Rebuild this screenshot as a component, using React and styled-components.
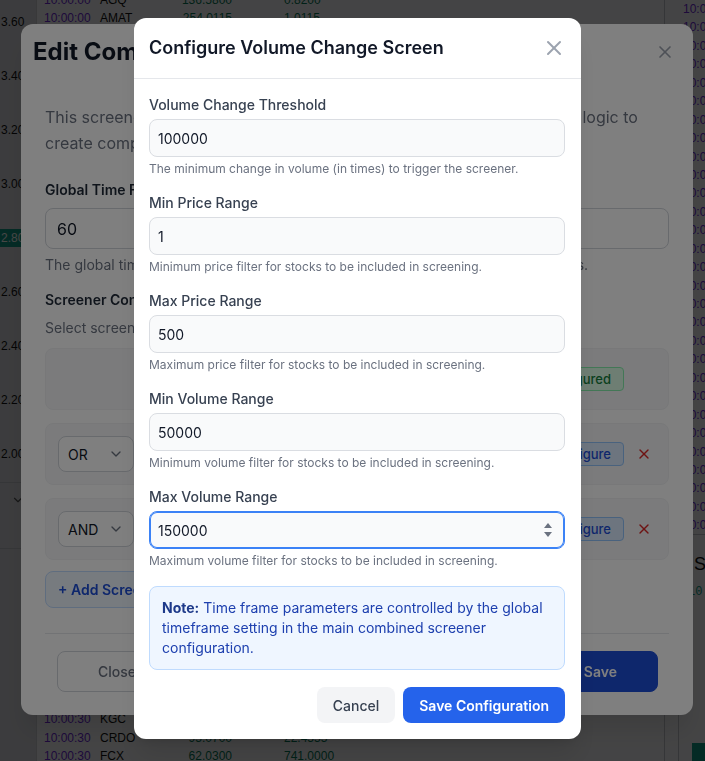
import styled, { createGlobalStyle } from "styled-components";
import { X, ChevronDown } from "lucide-react";

const GlobalStyle = createGlobalStyle`
  * { box-sizing: border-box; }
  body {
    margin: 0;
    overflow: hidden;
    font-family: Inter, "Noto Sans", sans-serif;
  }
`;

/* ---------- page behind the dialogs ---------- */

const Page = styled.div`
  display: flex;
  width: 100vw;
  height: 100vh;
  overflow: hidden;
  background: #fafafb;
  font-family: "Liberation Sans", Arial, sans-serif;
  font-size: 12px;
`;

const ChartStrip = styled.aside`
  width: 37px;
  flex: none;
  display: flex;
  flex-direction: column;
  background: #dcdde2;
  border-right: 1px solid #cfd1d6;
`;

const AxisTicks = styled.div`
  height: 483px;
  padding-top: 13px;
  border-bottom: 1px solid #c4c6cc;
`;

const Tick = styled.div`
  height: 54px;
  span {
    display: inline-block;
    padding: 0 1px;
    line-height: 18px;
    color: ${(p) => (p.$active ? "#fff" : "#111")};
    background: ${(p) => (p.$active ? "#0f9d88" : "transparent")};
  }
`;

const StripSection = styled.div`
  height: 66px;
  display: flex;
  align-items: flex-start;
  justify-content: center;
  padding-top: 10px;
  color: #555;
  border-bottom: 1px solid #c4c6cc;
`;

const Table = styled.div`
  width: 627px;
  flex: none;
  margin-top: -9px;
  padding-left: 7px;
`;

const Row = styled.div`
  display: grid;
  grid-template-columns: 56px 60px 72px 1fr;
  height: 18.45px;
  line-height: 18.45px;
  white-space: nowrap;
`;

const Time = styled.span`
  color: #6d28d9;
`;

const Sym = styled.span`
  color: #111;
`;

const Num = styled.span`
  color: #047857;
  text-align: ${(p) => (p.$right ? "right" : "left")};
  padding-left: ${(p) => (p.$right ? 0 : 52)}px;
`;

const SidePanel = styled.aside`
  width: 300px;
  flex: none;
  display: flex;
  flex-direction: column;
  border-left: 1px solid #c4c6cc;
`;

const SideList = styled.div`
  height: 535px;
  flex: none;
  padding: 0 0 0 18px;
  border-bottom: 1px solid #c4c6cc;
  overflow: hidden;
`;

const SideStats = styled.div`
  flex: 1;
  margin-left: 13px;
  padding: 16px 0 0 15px;
  border-left: 1px solid #c4c6cc;
  display: flex;
  flex-direction: column;
  h4 {
    margin: 0;
    font-size: 18px;
    line-height: 26px;
    font-weight: 400;
    color: #111;
  }
  p {
    margin: 8px 0 0 -6px;
    color: #0f9d88;
    font-family: "Liberation Mono", monospace;
    font-size: 12px;
  }
`;

const TealBlock = styled.div`
  margin: auto 0 0 -2px;
  height: 18px;
  width: 60px;
  background: #0f9d88;
`;

/* ---------- shared modal bits ---------- */

const Backdrop = styled.div`
  position: fixed;
  inset: 0;
  display: flex;
  justify-content: center;
  align-items: flex-start;
  padding: ${(p) => p.$top}px 0 0 ${(p) => p.$shift}px;
  background: rgba(0, 0, 0, ${(p) => p.$alpha});
`;

/* ---------- edit combined screener modal ---------- */

const EditModal = styled.div`
  width: 672px;
  background: #fff;
  border-radius: 12px;
  box-shadow: 0 20px 25px -5px rgba(0, 0, 0, 0.1);
`;

const EditHeader = styled.div`
  display: flex;
  align-items: center;
  justify-content: space-between;
  padding: 12px 18px 12px 12px;
  h2 {
    margin: 0;
    font-size: 24px;
    line-height: 32px;
    font-weight: 700;
    color: #111827;
  }
  svg {
    color: #9ca3af;
  }
`;

const EditBody = styled.div`
  padding: 24px 24px 23px;
`;

const Lead = styled.p`
  margin: 0 0 24px;
  font-size: 16px;
  line-height: 26px;
  color: #6b7280;
`;

const SectionLabel = styled.div`
  font-size: 14px;
  line-height: 20px;
  font-weight: 600;
  color: #1f2937;
  margin-top: ${(p) => p.$gap || 0}px;
`;

const BigInput = styled.input`
  display: block;
  width: 100%;
  height: 41px;
  margin-top: 8px;
  padding: 0 11px;
  border: 1px solid #d1d5db;
  border-radius: 8px;
  font: 16px Inter, sans-serif;
  color: #111827;
  background: #fff;
`;

const Hint = styled.div`
  margin-top: ${(p) => p.$gap || 6}px;
  font-size: 14px;
  line-height: 20px;
  color: #6b7280;
`;

const CardList = styled.div`
  display: flex;
  flex-direction: column;
  gap: 13px;
  margin-top: 10px;
`;

const Card = styled.div`
  display: flex;
  align-items: center;
  gap: 8px;
  padding: 12px;
  background: #f6f7f9;
  border: 1px solid #f0f1f3;
  border-radius: 8px;
`;

const OpSelect = styled.div`
  width: 76px;
  height: 36px;
  flex: none;
  display: flex;
  align-items: center;
  justify-content: space-between;
  padding: 0 9px;
  border: 1px solid #d1d5db;
  border-radius: 8px;
  background: #fff;
  font-size: 14px;
  color: #111827;
  visibility: ${(p) => (p.$hidden ? "hidden" : "visible")};
  svg {
    color: #6b7280;
  }
`;

const NameSelect = styled(OpSelect)`
  width: auto;
  flex: 1;
  padding: 0 12px;
`;

const Pill = styled.div`
  height: 24px;
  display: flex;
  align-items: center;
  padding: 0 12px;
  border-radius: 4px;
  font-size: 13px;
  font-weight: 500;
  border: 1px solid ${(p) => (p.$done ? "#86efac" : "#93c5fd")};
  background: ${(p) => (p.$done ? "#dcfce7" : "#dbeafe")};
  color: ${(p) => (p.$done ? "#15803d" : "#1d4ed8")};
`;

const DeleteBtn = styled.div`
  width: 24px;
  height: 24px;
  flex: none;
  display: flex;
  align-items: center;
  justify-content: center;
  color: #dc2626;
  visibility: ${(p) => (p.$hidden ? "hidden" : "visible")};
`;

const AddButton = styled.div`
  display: inline-block;
  margin-top: 11px;
  padding: 8px 12px;
  border: 1px solid #bfdbfe;
  border-radius: 8px;
  background: #eff6ff;
  color: #1d4ed8;
  font-size: 14px;
  line-height: 19px;
  font-weight: 600;
`;

const EditFooter = styled.div`
  display: flex;
  justify-content: space-between;
  margin-top: 25px;
  padding: 17px 11px 0 12px;
  border-top: 1px solid #e5e7eb;
`;

const FooterButton = styled.div`
  height: 41px;
  display: flex;
  align-items: center;
  padding: 0 40px;
  border-radius: 8px;
  font-size: 14px;
  font-weight: ${(p) => (p.$primary ? 600 : 500)};
  border: 1px solid ${(p) => (p.$primary ? "#1d4ed8" : "#d1d5db")};
  background: ${(p) => (p.$primary ? "#1d4ed8" : "#fff")};
  color: ${(p) => (p.$primary ? "#fff" : "#6b7280")};
`;

/* ---------- configure volume change dialog ---------- */

const Dialog = styled.div`
  width: 447px;
  background: #fff;
  border-radius: 12px;
  box-shadow: 0 20px 25px -5px rgba(0, 0, 0, 0.1), 0 8px 10px -6px rgba(0, 0, 0, 0.1);
`;

const DialogHeader = styled.div`
  display: flex;
  align-items: center;
  justify-content: space-between;
  padding: 16px 15px;
  border-bottom: 1px solid #e5e7eb;
  h3 {
    margin: 0;
    font-size: 18px;
    line-height: 28px;
    font-weight: 600;
    color: #111827;
  }
  svg {
    color: #9ca3af;
  }
`;

const DialogBody = styled.div`
  display: flex;
  flex-direction: column;
  gap: 16px;
  padding: 16px 16px 16px 15px;
`;

const Field = styled.div`
  display: flex;
  flex-direction: column;
`;

const FieldLabel = styled.label`
  font-size: 14px;
  line-height: 20px;
  font-weight: 500;
  color: #374151;
  margin-bottom: 4px;
`;

const InputWrap = styled.div`
  position: relative;
`;

const Input = styled.input`
  display: block;
  width: 100%;
  height: 38px;
  padding: 0 8px;
  border: 1px solid ${(p) => (p.$focused ? "#3b82f6" : "#dadde2")};
  box-shadow: ${(p) => (p.$focused ? "inset 0 0 0 1px #3b82f6" : "none")};
  border-radius: 8px;
  background: #f9fafb;
  font: 14px Inter, sans-serif;
  color: #111827;
  outline: none;
`;

const Spinner = styled.svg`
  position: absolute;
  right: 12px;
  top: 11px;
`;

const FieldHint = styled.div`
  margin-top: 4px;
  font-size: 12px;
  line-height: 16px;
  color: #6b7280;
`;

const Note = styled.div`
  margin-top: 1px;
  padding: 11px 12px;
  background: #eff6ff;
  border: 1px solid #bfdbfe;
  border-radius: 8px;
  font-size: 14px;
  line-height: 20px;
  color: #1e40af;
  strong {
    font-weight: 700;
    color: #1e3a8a;
  }
`;

const Actions = styled.div`
  display: flex;
  justify-content: flex-end;
  gap: 8px;
  margin-top: 1px;
`;

const ActionButton = styled.button`
  height: 36px;
  padding: 0 16px;
  border: none;
  border-radius: 8px;
  font: ${(p) => (p.$primary ? 600 : 500)} 14px Inter, sans-serif;
  background: ${(p) => (p.$primary ? "#2563eb" : "#f3f4f6")};
  color: ${(p) => (p.$primary ? "#fff" : "#374151")};
`;

/* ---------- data ---------- */

const symbols = [
  "AGQ", "AMAT", "SOXL", "TSLA", "NVDA", "AMD", "PLTR", "MU", "SMCI", "COIN",
  "MARA", "RIOT", "AAPL", "META", "NFLX", "AVGO", "INTC", "SNAP", "UBER", "SHOP",
  "RIVN", "LCID", "NIO", "SOFI", "HOOD", "ARM", "DELL", "ORCL", "CRM", "ADBE",
  "QCOM", "TXN", "LRCX", "KLAC", "ASML", "TSM", "SLV", "GLD", "NEM", "KGC",
  "CRDO", "FCX", "VALE", "BHP",
];

const fixed = {
  AGQ: ["136.5800", "0.8200"],
  AMAT: ["254.0115", "1.0115"],
  CRDO: ["95.0700", "22.4555"],
  FCX: ["62.0300", "741.0000"],
};

const trades = symbols.map((s, i) => {
  const seed = (i * 37 + 11) % 97;
  const [price, chg] = fixed[s] || [
    (20 + seed * 3.17).toFixed(4),
    (seed / 7.3).toFixed(4),
  ];
  return { time: i < 22 ? "10:00:00" : "10:00:30", sym: s, price, chg };
});

const ticks = ["3.60", "3.40", "3.20", "3.00", "2.80", "2.60", "2.40", "2.20", "2.00"];

const fields = [
  { label: "Volume Change Threshold", value: "100000", hint: "The minimum change in volume (in times) to trigger the screener." },
  { label: "Min Price Range", value: "1", hint: "Minimum price filter for stocks to be included in screening." },
  { label: "Max Price Range", value: "500", hint: "Maximum price filter for stocks to be included in screening." },
  { label: "Min Volume Range", value: "50000", hint: "Minimum volume filter for stocks to be included in screening." },
  { label: "Max Volume Range", value: "150000", hint: "Maximum volume filter for stocks to be included in screening.", focused: true },
];

const screeners = [
  { op: null, name: "Volume Change", done: true },
  { op: "OR", name: "Price Change", done: false },
  { op: "AND", name: "Gap Up", done: false },
];

const Background = () => (
  <Page>
    <ChartStrip>
      <AxisTicks>
        {ticks.map((t) => (
          <Tick key={t} $active={t === "2.80"}>
            <span>{t}</span>
          </Tick>
        ))}
      </AxisTicks>
      <StripSection>
        <ChevronDown size={14} />
      </StripSection>
    </ChartStrip>
    <Table>
      {trades.map((t) => (
        <Row key={t.sym}>
          <Time>{t.time}</Time>
          <Sym>{t.sym}</Sym>
          <Num $right>{t.price}</Num>
          <Num>{t.chg}</Num>
        </Row>
      ))}
    </Table>
    <SidePanel>
      <SideList>
        {trades.slice(0, 30).map((t) => (
          <Row key={t.sym}>
            <Time>{t.time}</Time>
          </Row>
        ))}
      </SideList>
      <SideStats>
        <h4>Stats</h4>
        <p>10:00:30</p>
        <TealBlock />
      </SideStats>
    </SidePanel>
  </Page>
);

const EditCombined = () => (
  <EditModal>
    <EditHeader>
      <h2>Edit Combined Screener</h2>
      <X size={20} />
    </EditHeader>
    <EditBody>
      <Lead>
        This screener combines multiple stand-alone screeners using AND/OR logic to
        create complex screening conditions.
      </Lead>
      <SectionLabel>Global Time Frame (minutes)</SectionLabel>
      <BigInput readOnly value="60" />
      <Hint>The global timeframe applied to every single screener in this combined screeners.</Hint>
      <SectionLabel $gap={15}>Screener Configuration</SectionLabel>
      <Hint $gap={8}>Select screeners and how they should be combined.</Hint>
      <CardList>
        {screeners.map((s) => (
          <Card key={s.name}>
            <OpSelect $hidden={!s.op}>
              {s.op || "OR"}
              <ChevronDown size={16} />
            </OpSelect>
            <NameSelect>
              {s.name}
              <ChevronDown size={16} />
            </NameSelect>
            <Pill $done={s.done}>{s.done ? "Configured" : "Configure"}</Pill>
            <DeleteBtn $hidden={!s.op}>
              <X size={16} />
            </DeleteBtn>
          </Card>
        ))}
      </CardList>
      <AddButton>+ Add Screener</AddButton>
      <EditFooter>
        <FooterButton>Close</FooterButton>
        <FooterButton $primary>Save</FooterButton>
      </EditFooter>
    </EditBody>
  </EditModal>
);

const ConfigureDialog = () => (
  <Dialog>
    <DialogHeader>
      <h3>Configure Volume Change Screen</h3>
      <X size={24} strokeWidth={2} />
    </DialogHeader>
    <DialogBody>
      {fields.map((f) => (
        <Field key={f.label}>
          <FieldLabel>{f.label}</FieldLabel>
          <InputWrap>
            <Input readOnly value={f.value} $focused={f.focused} />
            {f.focused && (
              <Spinner width="10" height="16" viewBox="0 0 10 16">
                <path d="M5 1 L9 6 L1 6 Z" fill="#6b7280" />
                <path d="M1 10 L9 10 L5 15 Z" fill="#6b7280" />
              </Spinner>
            )}
          </InputWrap>
          <FieldHint>{f.hint}</FieldHint>
        </Field>
      ))}
      <Note>
        <strong>Note:</strong> Time frame parameters are controlled by the global
        timeframe setting in the main combined screener configuration.
      </Note>
      <Actions>
        <ActionButton>Cancel</ActionButton>
        <ActionButton $primary>Save Configuration</ActionButton>
      </Actions>
    </DialogBody>
  </Dialog>
);

const App = () => (
  <>
    <GlobalStyle />
    <Background />
    <Backdrop $alpha={0.45} $top={24} $shift={9}>
      <EditCombined />
    </Backdrop>
    <Backdrop $alpha={0.5} $top={18} $shift={10}>
      <ConfigureDialog />
    </Backdrop>
  </>
);

export default App;
